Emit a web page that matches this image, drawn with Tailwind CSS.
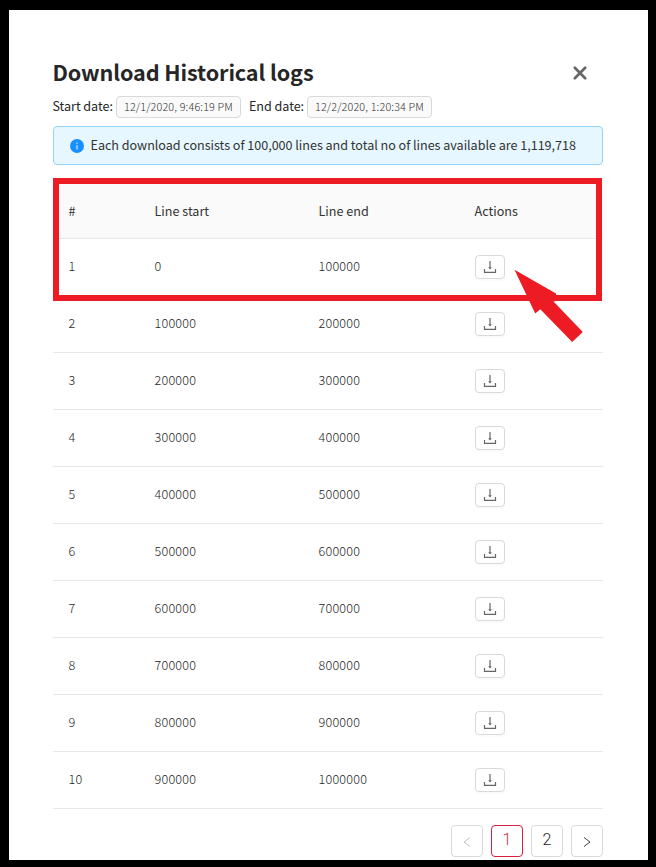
<!DOCTYPE html>
<html lang="en">
<head>
<meta charset="utf-8">
<title>Download Historical logs</title>
<script src="https://cdn.jsdelivr.net/npm/@tailwindcss/browser@4"></script>
</head>
<body class="bg-black">
<main class="relative h-[867px] w-[656px] overflow-hidden border-t-[10px] border-r-8 border-b-[7px] border-l-[9px] border-black bg-white pl-[43.500px] pr-[45px] pt-[45px] font-['Noto_Sans_CJK_SC','Open_Sans',sans-serif] text-[12.6px] leading-5 text-[#262626]">
  <header class="flex h-9 items-center justify-between pr-[15px]">
    <h1 class="pb-0.5 text-[21.6px] leading-[34px] font-bold tracking-[-0.11px] whitespace-nowrap">Download Historical logs</h1>
    <svg class="size-4" viewBox="0 0 16 16" fill="none" stroke="#666" stroke-width="2.7" stroke-linecap="round"><path d="M2.8 2.8l10.4 10.4M13.2 2.8L2.8 13.2"/></svg>
  </header>
  <div class="mt-[5px] flex h-[22px] items-center whitespace-nowrap">
    <span class="w-[63.500px] pb-0.5 tracking-[-0.05px]">Start date:</span>
    <span class="h-[22px] w-[125px] rounded border border-[#d9d9d9] bg-[#fafafa] pl-[7px] text-[10.8px] leading-[19px] font-light tracking-[0.15px] text-[#333]">12/1/2020, 9:46:19 PM</span>
    <span class="ml-2 w-[58px] pb-0.5 tracking-[-0.05px]">End date:</span>
    <span class="h-[22px] w-[125px] rounded border border-[#d9d9d9] bg-[#fafafa] pl-[7px] text-[10.8px] leading-[19px] font-light tracking-[0.15px] text-[#333]">12/2/2020, 1:20:34 PM</span>
  </div>
  <div class="ml-[0.5px] mt-2 flex h-[39px] w-[550px] items-center rounded border border-[#91d5ff] bg-[#e6f7ff] pl-4 whitespace-nowrap">
    <svg class="mr-[6.500px] size-3.5" viewBox="0 0 14 14"><circle cx="7" cy="7" r="7" fill="#1890ff"/><path d="M6.5 6h1v4.6h-1zM6.4 3.5h1.2v1.2H6.4z" fill="#e6f7ff"/></svg>
    <span class="pb-0.5 tracking-[-0.03px] text-[#333]">Each download consists of 100,000 lines and total no of lines available are 1,119,718</span>
  </div>
  <table class="ml-[0.5px] mt-[19px] w-[550px] table-fixed border-collapse text-left">
    <colgroup><col class="w-[86px]"><col class="w-[164px]"><col class="w-[156px]"><col></colgroup>
    <thead><tr class="h-[54px] border-b border-[#e8e8e8] bg-[#fafafa] *:px-[15.500px] *:py-0 *:font-normal *:text-[#333]"><th>#</th><th>Line start</th><th>Line end</th><th>Actions</th></tr></thead>
    <tbody id="rows" class="font-light tracking-[0.21px] text-[#262626]"></tbody>
  </table>
  <nav class="ml-[0.5px] mt-4 flex w-[550px] justify-end gap-2 font-['Roboto',sans-serif] text-base font-light *:flex *:size-8 *:items-center *:justify-center *:rounded *:border">
    <button class="border-[#d9d9d9]"><svg class="size-3" viewBox="0 0 12 12" fill="none" stroke="#bfbfbf"><path d="M9 2.5L3 7l6 4.500"/></svg></button>
    <button class="border-[#dc1f3c] pb-0.5 text-[#dc1f3c]">1</button>
    <button class="border-[#d9d9d9] pb-0.5">2</button>
    <button class="border-[#d9d9d9]"><svg class="size-3" viewBox="0 0 12 12" fill="none" stroke="#444"><path d="M3 2.5L9 7l-6 4.500"/></svg></button>
  </nav>
  <div class="absolute top-[168px] left-11 h-[123px] w-[549px] border-6 border-[#ed1c24]"></div>
  <svg class="absolute top-[259px] left-[505px] h-[75px] w-[71px]" viewBox="514 269 71 75"><path d="M514.5 269.800L556 293.500V301L553.500 301.500 582.800 332 572.200 342 540.300 309.200 535.200 313.500z" fill="#ed1c24"/></svg>
</main>
<template id="row"><tr class="h-[57px] border-b border-[#e8e8e8] *:px-[15.500px] *:pt-0 *:pb-0.5"><td></td><td></td><td></td><td class="px-4! pb-0!"><button class="flex h-6 w-[30px] items-center justify-center rounded border border-[#d9d9d9] bg-white shadow-[0_2px_0_rgba(0,0,0,0.015)]"><svg class="size-3.5" viewBox="0 0 14 14" fill="none" stroke="#666" stroke-width="1.2"><path d="M7 1v7.500M1.500 9v3.400h11V9"/><path d="M5.200 7.300h3.600L7 9.500z" fill="#666" stroke="none"/></svg></button></td></tr></template>
<script>
const rows = document.getElementById('rows'), template = document.getElementById('row');
for (let i = 1; i <= 10; i++) {
  const row = template.content.cloneNode(true);
  const cells = row.querySelectorAll('td');
  cells[0].textContent = i;
  cells[1].textContent = (i - 1) * 100000;
  cells[2].textContent = i * 100000;
  rows.append(row);
}
</script>
</body>
</html>
